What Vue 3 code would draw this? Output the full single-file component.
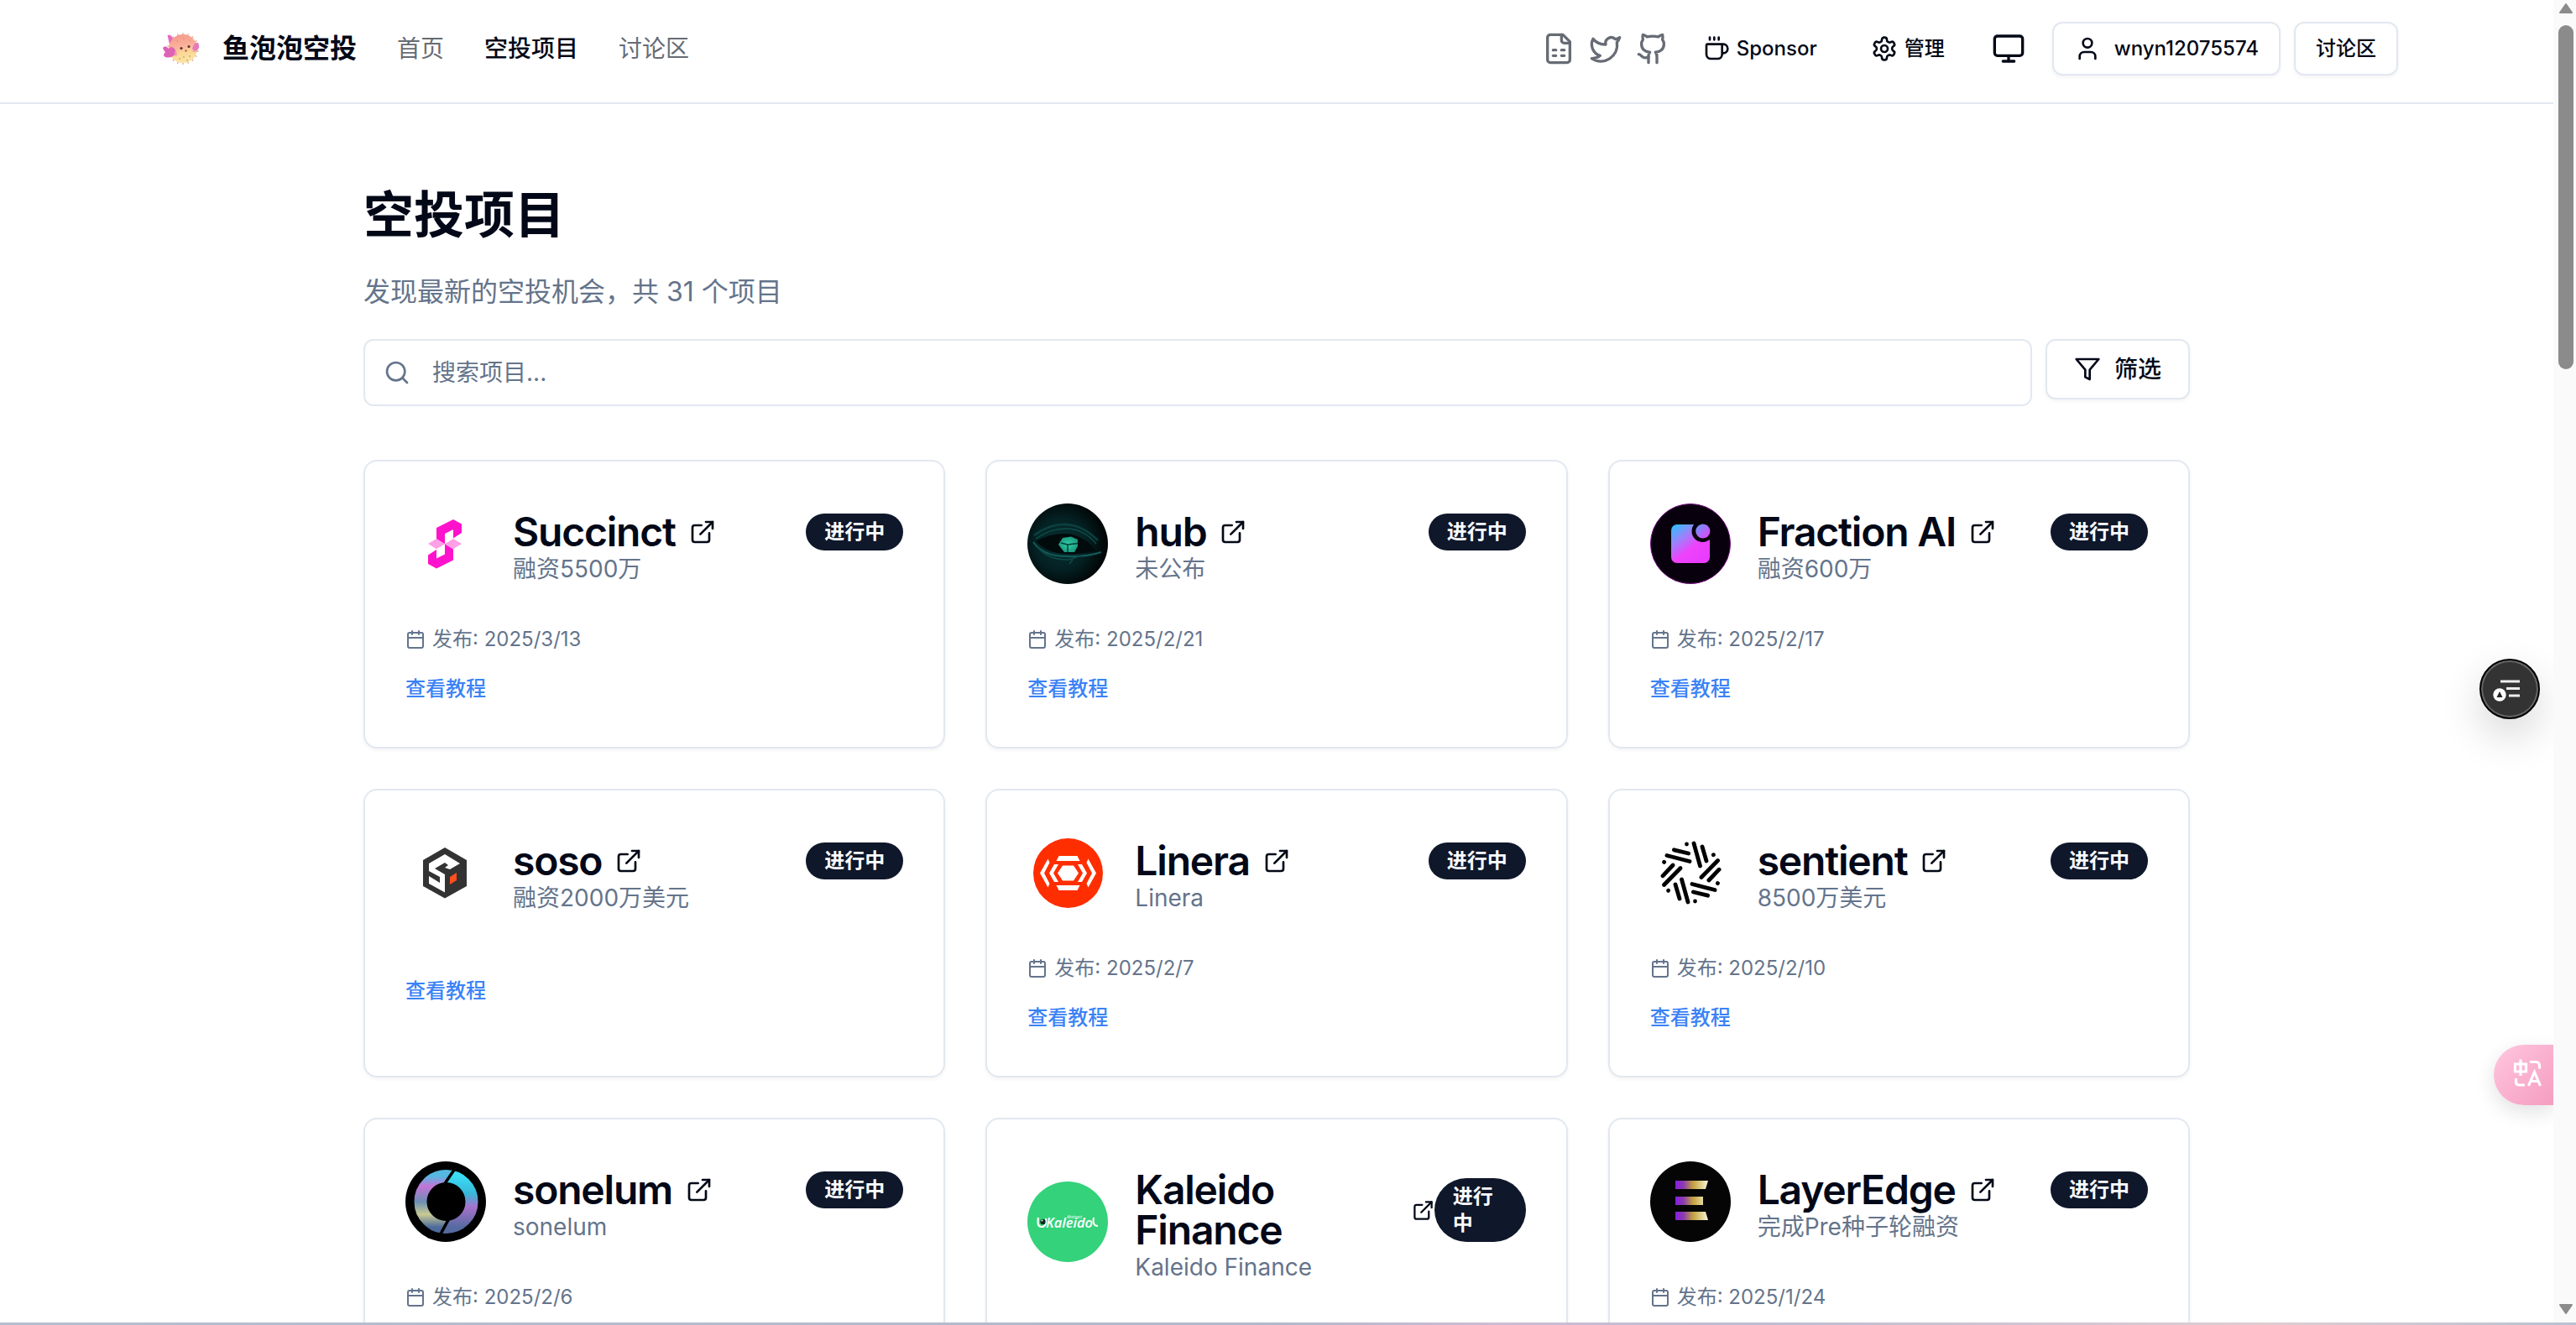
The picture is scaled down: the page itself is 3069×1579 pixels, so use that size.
<script setup>
const projects = [
  { name: 'Succinct', note: '融资5500万', date: '2025/3/13', logo: 'succinct', guide: true },
  { name: 'hub', note: '未公布', date: '2025/2/21', logo: 'hub', guide: true },
  { name: 'Fraction AI', note: '融资600万', date: '2025/2/17', logo: 'fraction', guide: true },
  { name: 'soso', note: '融资2000万美元', date: '', logo: 'soso', guide: true },
  { name: 'Linera', note: 'Linera', date: '2025/2/7', logo: 'linera', guide: true },
  { name: 'sentient', note: '8500万美元', date: '2025/2/10', logo: 'sentient', guide: true },
  { name: 'sonelum', note: 'sonelum', date: '2025/2/6', logo: 'sonelum' },
  { name: 'Kaleido Finance', note: 'Kaleido Finance', date: '', logo: 'kaleido', tight: true },
  { name: 'LayerEdge', note: '完成Pre种子轮融资', date: '2025/1/24', logo: 'layeredge' },
]
const turns = [0, 60, 120, 180, 240, 300]
const spikes = Array.from({ length: 18 }, (_, i) => i * 20)
</script>

<template>
  <div class="screen">
    <div class="page">
      <header class="topbar">
        <div class="brand">
          <svg class="fish" viewBox="0 0 64 64">
            <defs>
              <linearGradient id="fishBody" x1="0.4" y1="0" x2="0.6" y2="1">
                <stop offset="0" stop-color="#f79a8c" /><stop offset="0.45" stop-color="#fbb49b" />
                <stop offset="0.62" stop-color="#fbd795" /><stop offset="1" stop-color="#fbe6a4" />
              </linearGradient>
            </defs>
            <g stroke="#e0a184" stroke-width="1.2" stroke-linecap="round">
              <line v-for="s in spikes" :key="s" x1="33" y1="13.500" x2="33" y2="17" :transform="`rotate(${s} 33 32)`" />
            </g>
            <path d="M17 27 L14.500 16 Q19 14 22 22Z" fill="#e46cc0" />
            <circle cx="33" cy="32" r="17" fill="url(#fishBody)" />
            <path d="M24 34 Q20 27 16 32 Q12 27 9 31 Q10 35 12 36 Q8 40 12 42 Q18 44 24 39Z" fill="#dd63b4" />
            <path d="M44 32 Q47 23 51 25 Q54 30 50 34 Q46 36 44 32Z" fill="#e67bbd" />
            <path d="M24 34 Q28 38 25 41Q20 40 24 34ZM43 34 Q46 38 50 35Z" fill="#f58fb0" opacity=".7" />
            <circle cx="31" cy="31.500" r="1.500" fill="#54302f" /><circle cx="40" cy="29.500" r="1.500" fill="#54302f" />
            <circle cx="36.500" cy="34.500" r="1.200" fill="#c75b56" />
            <g fill="#b98455"><circle cx="34" cy="42" r=".8" /><circle cx="41" cy="41" r=".8" /><circle cx="29" cy="44" r=".8" /><circle cx="38" cy="46" r=".8" /><circle cx="26" cy="23" r=".6" /><circle cx="34" cy="20" r=".6" /><circle cx="41" cy="22" r=".6" /></g>
          </svg>
          <span class="brand-name">鱼泡泡空投</span>
        </div>
        <nav class="links">
          <a>首页</a><a class="active">空投项目</a><a>讨论区</a>
        </nav>
        <div class="tools">
          <div class="socials">
            <svg class="ico lg" viewBox="0 0 24 24"><path d="M15 2H6a2 2 0 0 0-2 2v16a2 2 0 0 0 2 2h12a2 2 0 0 0 2-2V7Z" /><path d="M14 2v4a2 2 0 0 0 2 2h4" /><path d="M8 13h2M14 13h2M8 17h2M14 17h2" /></svg>
            <svg class="ico lg" viewBox="0 0 24 24"><path d="M22 4s-.7 2.1-2 3.4c1.6 10-9.4 17.3-18 11.6 2.2.1 4.4-.6 6-2C3 15.5.5 9.6 3 5c2.2 2.6 5.6 4.1 9 4-.9-4.2 4-6.6 7-3.8 1.1 0 3-1.2 3-1.2z" /></svg>
            <svg class="ico lg" viewBox="0 0 24 24"><path d="M15 22v-4a4.8 4.8 0 0 0-1-3.5c3 0 6-2 6-5.5.08-1.25-.27-2.48-1-3.5.28-1.15.28-2.35 0-3.5 0 0-1 0-3 1.5-2.64-.5-5.36-.5-8 0C6 2 5 2 5 2c-.3 1.15-.3 2.35 0 3.5A5.403 5.403 0 0 0 4 9c0 3.5 3 5.5 6 5.5-.39.49-.68 1.05-.85 1.65-.17.6-.22 1.23-.15 1.85v4" /><path d="M9 18c-4.51 2-5-2-7-2" /></svg>
          </div>
          <button class="ghost">
            <svg class="ico" viewBox="0 0 24 24"><path d="M10 2v2M14 2v2M6 2v2" /><path d="M16 8a1 1 0 0 1 1 1v8a4 4 0 0 1-4 4H7a4 4 0 0 1-4-4V9a1 1 0 0 1 1-1h14a4 4 0 1 1 0 8h-1" /></svg>
            Sponsor
          </button>
          <button class="ghost">
            <svg class="ico" viewBox="0 0 24 24"><path d="M12.22 2h-.44a2 2 0 0 0-2 2v.18a2 2 0 0 1-1 1.73l-.43.25a2 2 0 0 1-2 0l-.15-.08a2 2 0 0 0-2.73.73l-.22.38a2 2 0 0 0 .73 2.73l.15.1a2 2 0 0 1 1 1.72v.51a2 2 0 0 1-1 1.74l-.15.09a2 2 0 0 0-.73 2.73l.22.38a2 2 0 0 0 2.73.73l.15-.08a2 2 0 0 1 2 0l.43.25a2 2 0 0 1 1 1.73V20a2 2 0 0 0 2 2h.44a2 2 0 0 0 2-2v-.18a2 2 0 0 1 1-1.73l.43-.25a2 2 0 0 1 2 0l.15.08a2 2 0 0 0 2.73-.73l.22-.39a2 2 0 0 0-.73-2.73l-.15-.08a2 2 0 0 1-1-1.74v-.5a2 2 0 0 1 1-1.74l.15-.09a2 2 0 0 0 .73-2.73l-.22-.38a2 2 0 0 0-2.73-.73l-.15.08a2 2 0 0 1-2 0l-.43-.25a2 2 0 0 1-1-1.73V4a2 2 0 0 0-2-2z" /><circle cx="12" cy="12" r="3" /></svg>
            管理
          </button>
          <button class="square">
            <svg class="ico lg" viewBox="0 0 24 24"><rect width="20" height="14" x="2" y="3" rx="2" /><path d="M8 21h8M12 17v4" /></svg>
          </button>
          <button class="outline">
            <svg class="ico user" viewBox="0 0 24 24"><path d="M19 21v-2a4 4 0 0 0-4-4H9a4 4 0 0 0-4 4v2" /><circle cx="12" cy="7" r="4" /></svg>
            wnyn12075574
          </button>
          <button class="outline">讨论区</button>
        </div>
      </header>

      <main>
        <h1>空投项目</h1>
        <p class="lead">发现最新的空投机会，共 31 个项目</p>
        <div class="searchrow">
          <div class="search">
            <svg class="ico" viewBox="0 0 24 24"><circle cx="11" cy="11" r="8" /><path d="m21 21-4.3-4.3" /></svg>
            <span>搜索项目...</span>
          </div>
          <button class="filter">
            <svg class="ico" viewBox="0 0 24 24"><path d="M22 3H2l8 9.46V19l4 2v-8.54L22 3z" /></svg>
            筛选
          </button>
        </div>

        <section class="grid">
          <article v-for="p in projects" :key="p.name" class="card">
            <div class="head">
              <svg v-if="p.logo === 'succinct'" class="avatar" viewBox="0 0 96 96">
                <path d="M27 48l10-6 10 6.3-10 6zM67 48l-10-6-10 6.3 10 6z" fill="#ff9fe6" />
                <path d="M37 29 57 19 67 24.5V35L57 41.5V31L47 36V48.3L37 42ZM57 67.5 37 77.5 27 72V61.5L37 55V65.5L47 60.5V48.3L57 54.5Z" fill="#ff12cb" />
              </svg>
              <svg v-else-if="p.logo === 'hub'" class="avatar" viewBox="0 0 96 96">
                <defs>
                  <radialGradient id="hubBg" cx=".42" cy=".5" r=".55"><stop offset="0" stop-color="#083334" /><stop offset=".6" stop-color="#042022" /><stop offset="1" stop-color="#010607" /></radialGradient>
                  <radialGradient id="hubIris"><stop offset="0" stop-color="#2ed0a4" /><stop offset="1" stop-color="#1c9a80" /></radialGradient>
                  <clipPath id="hubClip"><circle cx="48" cy="48" r="48" /></clipPath>
                </defs>
                <g clip-path="url(#hubClip)">
                  <rect width="96" height="96" fill="url(#hubBg)" />
                  <path d="M8 38Q26 24 46 25T84 44" fill="none" stroke="#0a4140" stroke-width="2.500" />
                  <path d="M10 42Q28 29 48 30T82 48" fill="none" stroke="#0c4d4a" stroke-width="1.500" />
                  <path d="M10 45Q32 33 54 37Q72 42 82 57Q54 62 36 59Q20 56 10 45Z" fill="#020b0c" />
                  <path d="M7 46Q18 62 44 63T88 58" fill="none" stroke="#125c59" stroke-width="2" />
                  <path d="M12 52Q26 68 50 67L64 62M50 72 54 67" fill="none" stroke="#0d4b49" stroke-width="1.600" />
                  <path d="M37 49 42 41 52 39.500 60 43 60 51 56 58 44 58Z" fill="url(#hubIris)" />
                  <path d="M48 49 40 47M48 49 60 47.500M48 49V58" stroke="#063c3c" stroke-width="1.500" />
                </g>
              </svg>
              <svg v-else-if="p.logo === 'fraction'" class="avatar" viewBox="0 0 96 96">
                <defs><linearGradient id="fr" x1="26" y1="25" x2="62" y2="72" gradientUnits="userSpaceOnUse"><stop offset="0" stop-color="#23c4ff" /><stop offset=".33" stop-color="#9b83fb" /><stop offset=".62" stop-color="#ef42fb" /><stop offset="1" stop-color="#e83cff" /></linearGradient>
                  <linearGradient id="fr2" x1="0" y1="0" x2="1" y2="1"><stop offset="0" stop-color="#5b9dfb" /><stop offset="1" stop-color="#f23cf5" /></linearGradient></defs>
                <circle cx="48" cy="48" r="47.5" fill="#09000e" stroke="#7b0d86" stroke-width="1" />
                <rect x="25" y="25" width="46" height="46" rx="7" fill="url(#fr)" />
                <circle cx="62.5" cy="33" r="13" fill="#09000e" />
                <circle cx="62.8" cy="33" r="8.6" fill="url(#fr2)" />
              </svg>
              <svg v-else-if="p.logo === 'soso'" class="avatar" viewBox="0 0 96 96">
                <path d="M47 18 73 33V64L47 78.500 21 64V33Z" fill="#333" />
                <path d="M47 26 28 37V46L41 53V60L28 52V61L47 71.500V50L35 43 47 36 51 39 47 42 53 44 65 37Z" fill="#fff" />
                <path d="M53 53 61 48V57L53 62Z" fill="#ff4f1f" />
              </svg>
              <svg v-else-if="p.logo === 'linera'" class="avatar" viewBox="0 0 96 96">
                <circle cx="48.500" cy="48.500" r="41.500" fill="#ff2e00" />
                <g fill="#fff">
                  <path d="M36 48.500 42 39.500H55L61 48.500 55 57.500H42Z" />
                  <path d="M37 38 31 48.500 37 59H32L26 48.500 32 38ZM24.500 31.500 26.500 36 20 48.500 26.500 61 24.500 65.500 15 48.500Z" />
                  <path d="M60 38 66 48.500 60 59H65L71 48.500 65 38ZM72.500 31.500 70.500 36 77 48.500 70.500 61 72.500 65.500 82 48.500Z" />
                  <path d="M37.500 28H59.500L62.500 34H34.500ZM37.500 69H59.500L62.500 63H34.500Z" />
                </g>
              </svg>
              <svg v-else-if="p.logo === 'sentient'" class="avatar" viewBox="0 0 96 96">
                <g stroke="#000" stroke-width="4.800" stroke-linecap="round">
                  <g v-for="t in turns" :key="t" :transform="`rotate(${t} 48.500 48)`">
                    <path d="M52 13 59.500 40M62 17 67 34M43.500 14V14.100" />
                  </g>
                </g>
              </svg>
              <svg v-else-if="p.logo === 'sonelum'" class="avatar" viewBox="0 0 96 96">
                <defs>
                  <linearGradient id="sa" x1="0" y1="0" x2="0" y2="1"><stop offset="0" stop-color="#55b8e0" /><stop offset=".2" stop-color="#c374d6" /><stop offset=".5" stop-color="#6c8fb4" /><stop offset=".75" stop-color="#c9ca92" /><stop offset="1" stop-color="#4d6a9b" /></linearGradient>
                  <linearGradient id="sb" x1="0" y1="0" x2="0" y2="1"><stop offset="0" stop-color="#3bdcf5" /><stop offset=".35" stop-color="#38b6d8" /><stop offset=".6" stop-color="#a672cc" /><stop offset="1" stop-color="#566aa0" /></linearGradient>
                  <clipPath id="sLeft"><path d="M0 0H63L43 29 50 68 37 92 0 96Z" /></clipPath>
                  <clipPath id="sRight"><path d="M96 0H67L46 31 54 68 41 92 96 96Z" /></clipPath>
                </defs>
                <circle cx="48" cy="48" r="48" fill="#000" />
                <circle cx="48.500" cy="48" r="30.500" fill="none" stroke="url(#sa)" stroke-width="15" clip-path="url(#sLeft)" />
                <circle cx="48.500" cy="48" r="30.500" fill="none" stroke="url(#sb)" stroke-width="15" clip-path="url(#sRight)" />
              </svg>
              <svg v-else-if="p.logo === 'kaleido'" class="avatar" viewBox="0 0 96 96">
                <circle cx="48" cy="48" r="48" fill="#34d27b" />
                <path d="M13 43Q11 54 17 54T22 44" fill="none" stroke="#fff" stroke-width="2.200" />
                <circle cx="18.500" cy="48" r="3.200" fill="#0b2b1c" /><circle cx="17.500" cy="46.500" r="1" fill="#fff" />
                <text x="22" y="54.500" class="kal" textLength="56" lengthAdjust="spacingAndGlyphs">Kaleido</text>
                <text x="47" y="44" class="kal-s">Abstract</text>
                <path d="M79 43Q77 53 84 53" fill="none" stroke="#fff" stroke-width="2" />
              </svg>
              <svg v-else class="avatar" viewBox="0 0 96 96">
                <defs><linearGradient id="le" x1="0" x2="1"><stop offset="0" stop-color="#8a1de0" /><stop offset=".25" stop-color="#8b3cae" /><stop offset=".55" stop-color="#c4a53c" /><stop offset="1" stop-color="#f8f3d8" /></linearGradient></defs>
                <circle cx="48" cy="48" r="48" fill="#050505" />
                <path d="M30 23H69L66 33H30ZM30 42H63V52H30ZM30 60H66L69 70H30Z" fill="url(#le)" />
              </svg>

              <div class="info">
                <div class="titlerow" :class="{ tight: p.tight }">
                  <div class="name">
                    <h3>{{ p.name }}</h3>
                    <svg class="ico ext" viewBox="0 0 24 24"><path d="M15 3h6v6" /><path d="M10 14 21 3" /><path d="M18 13v6a2 2 0 0 1-2 2H5a2 2 0 0 1-2-2V8a2 2 0 0 1 2-2h6" /></svg>
                  </div>
                  <span class="badge">进行中</span>
                </div>
                <p class="note">{{ p.note }}</p>
              </div>
            </div>
            <div class="body">
              <div v-if="p.date" class="date">
                <svg class="ico cal" viewBox="0 0 24 24"><path d="M8 2v4M16 2v4" /><rect width="18" height="18" x="3" y="4" rx="2" /><path d="M3 10h18" /></svg>
                <span>发布: {{ p.date }}</span>
              </div>
              <a v-if="p.guide" class="guide">查看教程</a>
            </div>
          </article>
        </section>
      </main>

      <div class="fab">
        <svg viewBox="0 0 72 72">
          <path d="M25 27H48M32 35.500H48M35 44H48" stroke="#eee" stroke-width="2.800" />
          <circle cx="24" cy="43" r="9" fill="#333" /><circle cx="24" cy="43" r="7.700" fill="#fff" /><path d="M24 39 27.500 46H20.500Z" fill="#222" />
        </svg>
      </div>
      <div class="translate">
        <svg viewBox="0 0 72 72" fill="none" stroke="#fff" stroke-width="3.200">
          <path d="M25.500 23H38.500V32H25.500ZM32 17.500V37M43 20.500H50Q54.500 20.500 54.500 25V28.500M26.500 40V44.500Q26.500 48 30.500 48H37" />
          <path d="M41.500 49 48.500 32.500 55.500 49M44 43.500H53" />
        </svg>
      </div>
    </div>

    <div class="scrollbar">
      <svg viewBox="0 0 18 14"><path d="M9 2 16 12H2Z" /></svg>
      <div class="thumb"></div>
      <svg class="down" viewBox="0 0 18 14"><path d="M9 12 16 2H2Z" /></svg>
    </div>
    <div class="edge"></div>
  </div>
</template>

<style>
body { overflow: hidden; }
</style>

<style scoped>
* { box-sizing: border-box; margin: 0; }
.screen { position: relative; display: flex; width: 3069px; height: 1579px; overflow: hidden; background: #fff; color: #020817; font-family: Inter, "Noto Sans CJK SC", sans-serif; }
.page { position: relative; width: 3042px; height: 1579px; overflow: hidden; }
.topbar { display: flex; align-items: center; height: 124px; padding: 0 185px 6px; border-bottom: 2px solid #e2e8f0; }
.brand { display: flex; align-items: center; gap: 16px; }
.fish { width: 64px; height: 64px; }
.brand-name { font-size: 32px; font-weight: 700; line-height: 48px; }
.links { display: flex; gap: 48px; margin-left: 48px; font-size: 28px; line-height: 40px; color: #676b74; }
.links .active { color: #020817; font-weight: 500; }
.tools { display: flex; align-items: center; gap: 16px; margin-left: auto; }
.socials { display: flex; gap: 16px; color: #676b74; }
.ico { width: 32px; height: 32px; flex: none; fill: none; stroke: currentColor; stroke-width: 2; stroke-linecap: round; stroke-linejoin: round; }
.ico.lg { width: 40px; height: 40px; }
button { display: flex; align-items: center; justify-content: center; background: #fff; border: 0; color: inherit; font-family: inherit; font-size: 24px; font-weight: 500; line-height: 32px; height: 64px; border-radius: 12px; white-space: nowrap; }
.ghost { gap: 8px; padding: 0 24px; }
.square { width: 72px; height: 72px; padding: 0; }
.outline { border: 2px solid #e2e8f0; padding: 0 24px; gap: 16px; box-shadow: 0 2px 4px rgba(0, 0, 0, .05); }
main { width: 2176px; margin: 0 auto; padding-top: 92px; }
h1 { font-size: 60px; font-weight: 700; line-height: 80px; }
.lead { margin-top: 28px; font-size: 32px; line-height: 48px; color: #64748b; }
.searchrow { display: flex; align-items: flex-start; gap: 16px; margin-top: 32px; }
.search { flex: 1; display: flex; align-items: center; height: 80px; padding-left: 22px; padding-bottom: 1px; gap: 26px; border: 2px solid #e2e8f0; border-radius: 12px; font-size: 28px; line-height: 40px; color: #64748b; }
.filter { height: 72px; padding: 0 32px; gap: 16px; font-size: 28px; border: 2px solid #e2e8f0; box-shadow: 0 2px 4px rgba(0, 0, 0, .05); }
.grid { display: grid; grid-template-columns: repeat(3, 1fr); gap: 48px; margin-top: 64px; }
.card { min-height: 344px; padding: 48px; border: 2px solid #e2e8f0; border-radius: 16px; box-shadow: 0 2px 4px rgba(0, 0, 0, .05); }
.head { display: flex; align-items: center; gap: 32px; }
.avatar { width: 96px; height: 96px; flex: none; }
.info { flex: 1; min-width: 0; padding-top: 12px; }
.titlerow { display: flex; align-items: center; justify-content: space-between; min-height: 48px; }
.name { display: flex; align-items: center; gap: 16px; }
h3 { font-size: 48px; font-weight: 600; line-height: 48px; letter-spacing: -1.2px; }
.badge { padding: 6px 22px; border-radius: 999px; background: #0f172a; color: #f8fafc; font-size: 24px; font-weight: 600; line-height: 32px; white-space: nowrap; }
.tight .name { flex: 1; justify-content: space-between; }
.tight h3 { width: 240px; }
.tight .ext { width: 27px; height: 27px; }
.tight .badge { width: 109px; white-space: normal; }
.note { font-size: 28px; line-height: 40px; color: #64748b; }
.body { display: flex; flex-direction: column; align-items: flex-start; margin-top: 48px; }
.date { display: flex; align-items: center; gap: 8px; font-size: 24px; line-height: 32px; color: #64748b; }
.cal { width: 24px; height: 24px; }
.guide { margin-top: 27px; font-size: 24px; font-weight: 500; line-height: 32px; color: #3b82f6; }
.kal { font-family: "Open Sans", sans-serif; font-size: 17px; font-style: italic; font-weight: 600; fill: #fff; }
.kal-s { font-family: "Open Sans", sans-serif; font-size: 5px; font-style: italic; fill: #fff; }
.fab { position: absolute; left: 2954px; top: 785px; width: 72px; height: 72px; border-radius: 50%; background: #333; border: 2px solid #000; box-shadow: inset 0 0 0 2px #666, 0 20px 50px rgba(0, 0, 0, .16); }
.fab svg { display: block; width: 72px; height: 72px; margin: -2px; }
.translate { position: absolute; right: 0; top: 1245px; width: 71px; height: 72px; border-radius: 36px 0 0 36px; background: linear-gradient(135deg, #ffc6df, #f59dc1); box-shadow: 0 8px 24px rgba(0, 0, 0, .12); }
.translate svg { display: block; width: 72px; height: 72px; }
.scrollbar { display: flex; flex-direction: column; align-items: center; width: 27px; height: 1579px; padding: 3px 3px 12px 6px; background: #fafafa; }
.scrollbar svg { width: 18px; height: 14px; fill: #8b8b8b; stroke: #8b8b8b; stroke-width: 2; stroke-linejoin: round; }
.thumb { width: 18px; height: 410px; margin-top: 13px; border-radius: 9px; background: #8b8b8b; }
.down { margin-top: auto; }
.edge { position: absolute; left: 0; right: 0; bottom: 0; height: 3px; background: linear-gradient(90deg, #b5bfd0, #b3b9cc 50%, #cdbdd4 58%, #bdbdd3 68%, #e0cdd2 88%, #b8c2d2); }
</style>
